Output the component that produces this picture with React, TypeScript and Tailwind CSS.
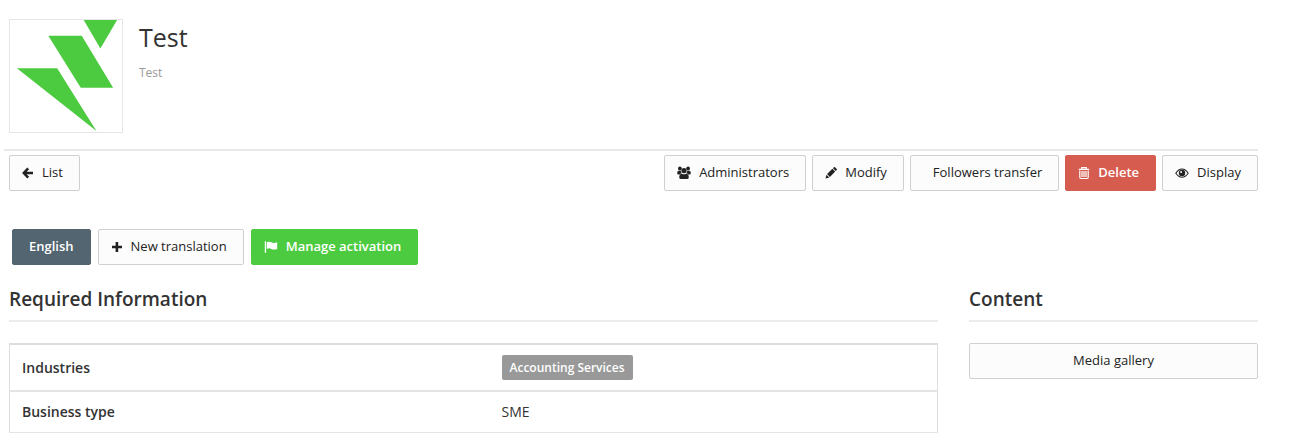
import type { ButtonHTMLAttributes, ReactNode } from "react";

type Variant = "light" | "slate" | "green" | "red";

type ButtonProps = ButtonHTMLAttributes<HTMLButtonElement> & {
  variant?: Variant;
  icon?: ReactNode;
};

const variants: Record<Variant, string> = {
  light: "border-[#d0d0d0] bg-[#fcfcfc] font-medium text-[#222]",
  slate: "border-[#526570] bg-[#526570] font-semibold text-white",
  green: "border-[#4dcb40] bg-[#4dcb40] font-semibold text-white",
  red: "border-[#d65c4f] bg-[#d65c4f] font-semibold text-white",
};

const Button = ({
  variant = "light",
  icon,
  className = "",
  children,
  ...rest
}: ButtonProps) => (
  <button
    type="button"
    className={`flex h-9 items-center justify-center gap-2 rounded-xs border text-[13px] whitespace-nowrap ${variants[variant]} ${className}`}
    {...rest}
  >
    {icon}
    {children}
  </button>
);

// narrow glyphs take a 12px slot, wide ones 14px
const Icon = ({ wide, children }: { wide?: boolean; children: ReactNode }) => (
  <svg
    viewBox={wide ? "0 0 14 14" : "1 0 12 14"}
    className={`shrink-0 ${wide ? "h-3.5 w-3.5" : "h-3.5 w-3"}`}
    fill="currentColor"
    aria-hidden="true"
  >
    {children}
  </svg>
);

const ArrowIcon = () => (
  <Icon>
    <path
      d="M7.2 2.4 2.8 7l4.4 4.6M3.2 7H12"
      fill="none"
      stroke="currentColor"
      strokeWidth="2.5"
    />
  </Icon>
);

const PlusIcon = () => (
  <Icon>
    <path d="M5.6 2h2.6v3.7H12v2.6H8.2V12H5.6V8.3H2V5.7h3.6z" />
  </Icon>
);

const UsersIcon = () => (
  <Icon wide>
    <circle cx="2.9" cy="2.5" r="1.9" />
    <circle cx="11.1" cy="2.5" r="1.9" />
    <circle cx="7" cy="4.6" r="2.6" />
    <path d="M1.8 4.8h1.9c.1 1.1.6 1.9 1.3 2.5-1 .1-1.7.5-2.2 1.1H1.1q-.8 0-.8-1V6.3q0-1.5 1.5-1.5ZM12.2 4.8h-1.9c-.1 1.1-.6 1.9-1.3 2.5 1 .1 1.7.5 2.2 1.1h1.7q.8 0 .8-1V6.3q0-1.5-1.5-1.5ZM4.8 7.8q2.2 1 4.4 0 2.5.2 2.5 2.5v1.5q0 1.3-1.5 1.3H3.8q-1.5 0-1.5-1.3v-1.5q0-2.3 2.5-2.5Z" />
  </Icon>
);

const PencilIcon = () => (
  <Icon>
    <path d="m1.5 12.5 1-3.8 2.8 2.8zM3.1 8.1l5.3-5.3 2.8 2.8-5.3 5.3zM9 2.2l.9-.9q.6-.6 1.2 0l1.6 1.6q.6.6 0 1.2l-.9.9z" />
  </Icon>
);

const TrashIcon = () => (
  <Icon>
    <path
      d="M2.8 4.5v6.8q0 1.2 1.2 1.2h6q1.2 0 1.2-1.2V4.5M1.8 3.4h10.4M4.7 3V1.6h4.6V3M5 5v6M7 5v6M9 5v6"
      fill="none"
      stroke="currentColor"
      strokeWidth="1.2"
    />
  </Icon>
);

const EyeIcon = () => (
  <Icon wide>
    <path
      d="M.8 7.2Q3.6 3 7 3t6.2 4.2Q10.4 11.2 7 11.2T.8 7.2Z"
      fill="none"
      stroke="currentColor"
      strokeWidth="1.1"
    />
    <path d="M7 3.8a3.2 3.2 0 1 0 0 6.4 3.2 3.2 0 0 0 0-6.4Zm-.9 1.2a1 1 0 1 1 0 2 1 1 0 0 1 0-2Z" />
  </Icon>
);

const FlagIcon = () => (
  <Icon wide>
    <path d="M.8 1.3h1.3v11.4H.8zM2.8 2.3q2.4-1.2 4.6 0 2.6 1.3 5.8 0v6.6q-3.2 1.3-5.8 0-2.2-1.2-4.6 0z" />
  </Icon>
);

const Logo = () => (
  <svg
    viewBox="0 0 114 114"
    className="size-[114px] shrink-0 border border-[#e6e6e6]"
    fill="#4dcb40"
    role="img"
    aria-label="Test"
  >
    <path d="M75 0h34L92 29zM39 16h34l32 53H72zM7 49h41l40 64z" />
  </svg>
);

const SectionTitle = ({ children }: { children: ReactNode }) => (
  <h2 className="mb-[21px] border-b-2 border-[#ececec] pb-[7px] text-[19px] leading-7 font-semibold text-[#333]">
    {children}
  </h2>
);

const App = () => {
  return (
    <div className="bg-white pr-[42px] pl-1 font-['Open_Sans',sans-serif] text-[#333]">
      <header className="flex gap-4 border-b-2 border-[#e8e8e8] pt-[19px] pb-4 pl-[5px]">
        <Logo />
        <div>
          <h1 className="text-[25px] leading-9 font-normal">Test</h1>
          <p className="mt-2 text-xs leading-5 text-[#999]">Test</p>
        </div>
      </header>

      <main className="pl-[5px]">
        <div className="flex justify-between pt-1">
          <Button className="pr-4 pl-3" icon={<ArrowIcon />}>
            List
          </Button>
          <div className="flex gap-1.5">
            <Button className="pr-4 pl-3" icon={<UsersIcon />}>
              Administrators
            </Button>
            <Button className="pr-4 pl-3" icon={<PencilIcon />}>
              Modify
            </Button>
            <Button className="pr-4 pl-[22px]">Followers transfer</Button>
            <Button className="pr-4 pl-3" variant="red" icon={<TrashIcon />}>
              Delete
            </Button>
            <Button className="pr-4 pl-3" icon={<EyeIcon />}>
              Display
            </Button>
          </div>
        </div>

        <div className="mt-[38px] flex gap-[7px] pl-[3px]">
          <Button className="px-4" variant="slate">
            English
          </Button>
          <Button className="pr-4 pl-3" icon={<PlusIcon />}>
            New translation
          </Button>
          <Button className="pr-4 pl-3" variant="green" icon={<FlagIcon />}>
            Manage activation
          </Button>
        </div>

        <div className="mt-5 flex items-start gap-[31px]">
          <section className="flex-1">
            <SectionTitle>Required Information</SectionTitle>
            <table className="w-full table-fixed border-collapse border border-t-2 border-[#ddd] text-sm">
              <tbody>
                <tr className="h-[47px] border-b-2 border-[#e4e4e4]">
                  <th scope="row" className="px-3 text-left font-semibold">
                    Industries
                  </th>
                  <td className="pl-7">
                    <span className="inline-block rounded-xs bg-[#999] px-2 text-xs leading-[25px] font-semibold text-white">
                      Accounting Services
                    </span>
                  </td>
                </tr>
                <tr className="h-[42px] border-b-2 border-[#e4e4e4]">
                  <th scope="row" className="px-3 text-left font-semibold">
                    Business type
                  </th>
                  <td className="pl-7">SME</td>
                </tr>
              </tbody>
            </table>
          </section>

          <aside className="w-[289px]">
            <SectionTitle>Content</SectionTitle>
            <Button className="w-full">Media gallery</Button>
          </aside>
        </div>
      </main>
    </div>
  );
};

export default App;
